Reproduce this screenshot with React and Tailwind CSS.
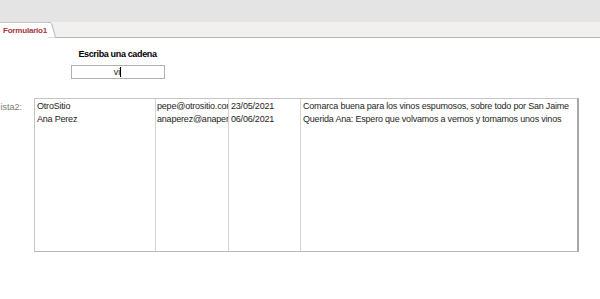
import React from 'react'

const rows = [
  { nombre: 'OtroSitio', email: 'pepe@otrositio.com', fecha: '23/05/2021', texto: 'Comarca buena para los vinos espumosos, sobre todo por San Jaime' },
  { nombre: 'Ana Perez', email: 'anaperez@anaperez.com', fecha: '06/06/2021', texto: 'Querida Ana: Espero que volvamos a vernos y tomamos unos vinos' },
]

const App = () => {
  return (
    <div className="w-[600px] h-[299px] bg-white overflow-hidden font-['Liberation_Sans',sans-serif] text-[#1e1e1e]">
      {/* top grey band */}
      <div className="h-[22px] bg-[#e4e4e4]" />

      {/* tab strip */}
      <div className="h-[16px] bg-[#f1f0ef] border-b border-[#b4b4b4] flex items-end">
        <div className="h-[16px] -mb-px bg-white border-t border-[#c6c6c6] flex items-center pl-[3px] pr-[1px]">
          <span className="text-[8px] font-bold text-[#a4373a] leading-none tracking-[-0.2px]">Formulario1</span>
        </div>
        <svg width="8" height="16" className="-mb-px" viewBox="0 0 8 16">
          <path d="M0 0 L2 0 Q3 0 3.6 1 L7.5 15.5 L0 15.5 Z" fill="#ffffff" />
          <path d="M0 0.5 L2 0.5 Q3 0.5 3.6 1.5 L7.5 15.5" fill="none" stroke="#b4b4b4" strokeWidth="1" />
        </svg>
      </div>

      {/* form body */}
      <div className="pt-[11px]">
        <div className="w-[235px] flex flex-col items-center">
          <div className="text-[9px] font-bold leading-[11px] text-black tracking-[-0.35px]">Escriba una cadena</div>
          <div className="mt-[5px] w-[94px] h-[14px] border border-[#b0b0b0] bg-white flex items-center justify-center">
            <span className="text-[9px] leading-none">vi</span>
            <span className="w-px h-[10px] bg-black" />
          </div>
        </div>

        <div className="mt-[19px] flex">
          <div className="w-[34px] text-[9px] text-[#7a7a7a] pt-[3px] pr-[12px] whitespace-nowrap overflow-hidden flex justify-end">
            <span>ista2:</span>
          </div>
          <div className="w-[545px] h-[154px] border-l border-t border-[#c4c4c4] border-r-2 border-r-[#a8a8a8] border-b border-b-[#b8b8b8] flex text-[9px] leading-[13px] tracking-[-0.2px]">
            <div className="w-[121px] border-r border-[#d4d4d4] pl-[2px] pt-[1px] overflow-hidden whitespace-nowrap">
              {rows.map((r) => <div key={r.nombre}>{r.nombre}</div>)}
            </div>
            <div className="w-[73px] border-r border-[#d4d4d4] pl-[1px] pt-[1px] overflow-hidden whitespace-nowrap">
              {rows.map((r) => <div key={r.email}>{r.email}</div>)}
            </div>
            <div className="w-[72px] border-r border-[#d4d4d4] pl-[2px] pt-[1px] overflow-hidden whitespace-nowrap">
              {rows.map((r) => <div key={r.fecha}>{r.fecha}</div>)}
            </div>
            <div className="flex-1 pl-[2px] pt-[1px] overflow-hidden whitespace-nowrap">
              {rows.map((r) => <div key={r.fecha}>{r.texto}</div>)}
            </div>
          </div>
        </div>
      </div>
    </div>
  )
}

export default App
